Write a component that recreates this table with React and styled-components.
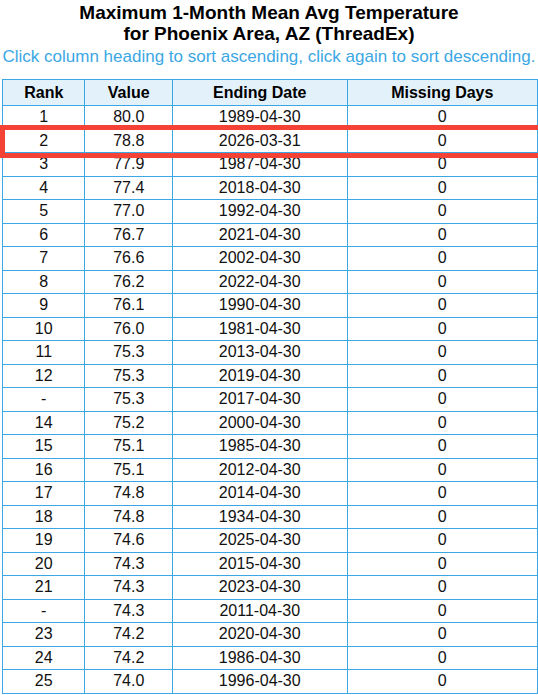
import React from 'react';
import styled, { createGlobalStyle } from 'styled-components';

const GlobalStyle = createGlobalStyle`
    body {
        margin: 0;
        background: #ffffff;
        font-family: "Liberation Sans", Arial, sans-serif;
    }
`;

const Page = styled.div`
    position: relative;
    width: 538px;
    overflow: hidden;
`;

const Title = styled.h1`
    margin: 0;
    padding-top: 2px;
    font-size: 19px;
    line-height: 21px;
    font-weight: bold;
    text-align: center;
    color: #000;
`;

const Hint = styled.div`
    margin-top: 3px;
    font-size: 17px;
    line-height: 20px;
    text-align: center;
    color: #3ba7e4;
    white-space: nowrap;
`;

const Table = styled.table`
    margin: 12px 0 0 2px;
    width: 536px;
    border-collapse: collapse;
    font-size: 16px;
`;

const Th = styled.th`
    width: ${(p) => p.w}px;
    height: 25px;
    padding: 0;
    border: 1px solid #3ba7e4;
    background: #e3f1fb;
    font-weight: bold;
    color: #000;
    cursor: pointer;
`;

const Td = styled.td`
    height: 22.5px;
    padding: 0;
    border: 1px solid #3ba7e4;
    text-align: center;
    color: #111;
`;

const Highlight = styled.div`
    position: absolute;
    left: 0;
    top: 125px;
    width: 560px;
    height: 23px;
    border: 5px solid #f44336;
    border-right: none;
    pointer-events: none;
`;

const rows = [
    ['1', '80.0', '1989-04-30'],
    ['2', '78.8', '2026-03-31'],
    ['3', '77.9', '1987-04-30'],
    ['4', '77.4', '2018-04-30'],
    ['5', '77.0', '1992-04-30'],
    ['6', '76.7', '2021-04-30'],
    ['7', '76.6', '2002-04-30'],
    ['8', '76.2', '2022-04-30'],
    ['9', '76.1', '1990-04-30'],
    ['10', '76.0', '1981-04-30'],
    ['11', '75.3', '2013-04-30'],
    ['12', '75.3', '2019-04-30'],
    ['-', '75.3', '2017-04-30'],
    ['14', '75.2', '2000-04-30'],
    ['15', '75.1', '1985-04-30'],
    ['16', '75.1', '2012-04-30'],
    ['17', '74.8', '2014-04-30'],
    ['18', '74.8', '1934-04-30'],
    ['19', '74.6', '2025-04-30'],
    ['20', '74.3', '2015-04-30'],
    ['21', '74.3', '2023-04-30'],
    ['-', '74.3', '2011-04-30'],
    ['23', '74.2', '2020-04-30'],
    ['24', '74.2', '1986-04-30'],
    ['25', '74.0', '1996-04-30'],
];

const App = () => {
    return (
        <Page>
            <GlobalStyle />
            <Title>
                Maximum 1-Month Mean Avg Temperature
                <br />
                for Phoenix Area, AZ (ThreadEx)
            </Title>
            <Hint>Click column heading to sort ascending, click again to sort descending.</Hint>
            <Table>
                <thead>
                    <tr>
                        <Th w={82}>Rank</Th>
                        <Th w={87}>Value</Th>
                        <Th w={175}>Ending Date</Th>
                        <Th w={191}>Missing Days</Th>
                    </tr>
                </thead>
                <tbody>
                    {rows.map((r, i) => (
                        <tr key={i}>
                            <Td>{r[0]}</Td>
                            <Td>{r[1]}</Td>
                            <Td>{r[2]}</Td>
                            <Td>0</Td>
                        </tr>
                    ))}
                </tbody>
            </Table>
            <Highlight />
        </Page>
    );
};

export default App;
